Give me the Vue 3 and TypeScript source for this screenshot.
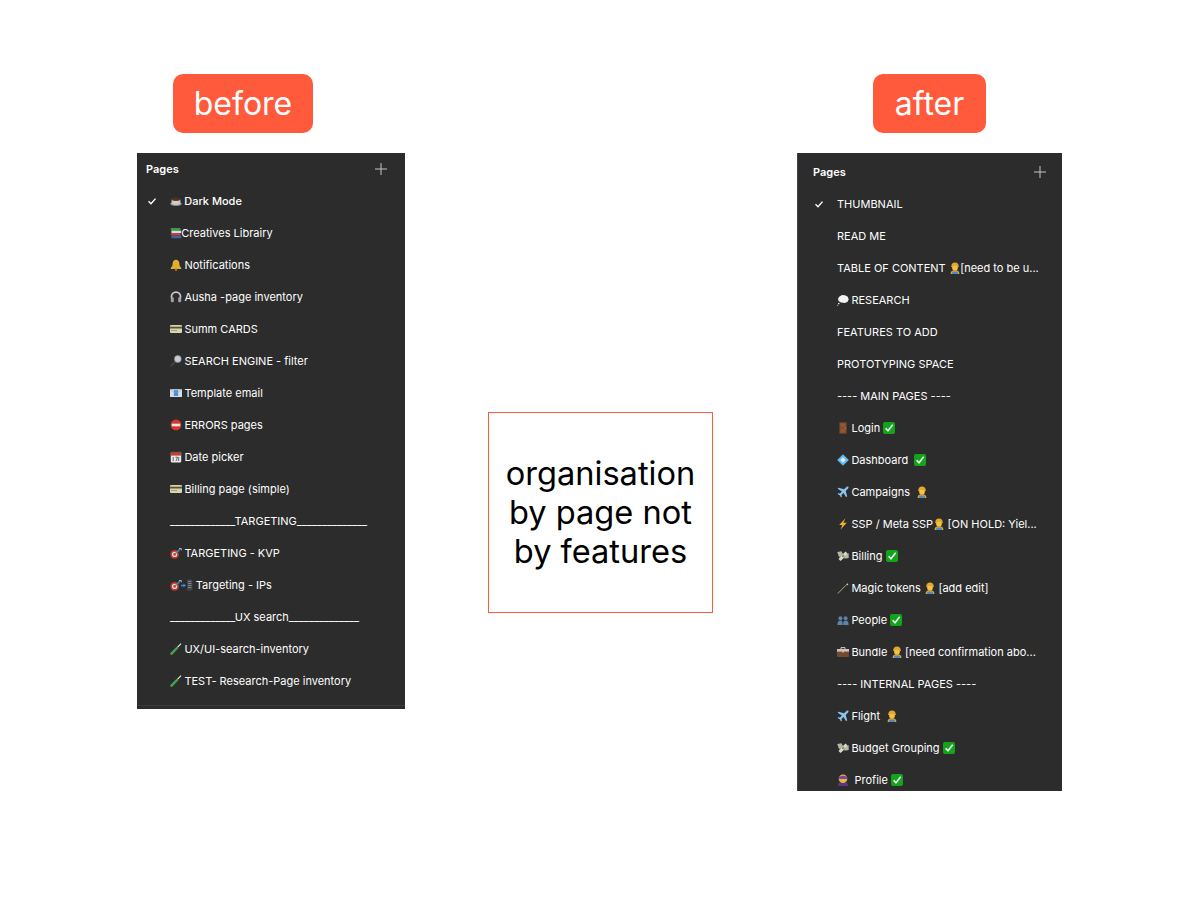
<script setup lang="ts">
interface Panel {
  name: string
  variant: string
  rows: string[]
}

const panels: Panel[] = [
  {
    name: 'before',
    variant: 'is-before',
    rows: [
      '{cup} Dark Mode',
      '{books}Creatives Librairy',
      '{bell} Notifications',
      '{phones} Ausha -page inventory',
      '{card} Summ CARDS',
      '{lens} SEARCH ENGINE - filter',
      '{mail} Template email',
      '{noentry} ERRORS pages',
      '{calendar} Date picker',
      '{card} Billing page (simple)',
      '_____________TARGETING______________',
      '{dart} TARGETING - KVP',
      '{dart}{mobile} Targeting - IPs',
      '_____________UX search______________',
      '{tube} UX/UI-search-inventory',
      '{tube} TEST- Research-Page inventory',
    ],
  },
  {
    name: 'after',
    variant: 'is-after',
    rows: [
      'THUMBNAIL',
      'READ ME',
      'TABLE OF CONTENT {worker}[need to be u...',
      '{balloon} RESEARCH',
      'FEATURES TO ADD',
      'PROTOTYPING SPACE',
      '---- MAIN PAGES ----',
      '{door} Login {done}',
      '{diamond} Dashboard  {done}',
      '{plane} Campaigns  {worker}',
      '{zap} SSP / Meta SSP{worker} [ON HOLD: Yiel...',
      '{money} Billing {done}',
      '{wand} Magic tokens {worker} [add edit]',
      '{people} People {done}',
      '{case} Bundle {worker} [need confirmation abo...',
      '---- INTERNAL PAGES ----',
      '{plane} Flight  {worker}',
      '{money} Budget Grouping {done}',
      '{hero}  Profile {done}',
    ],
  },
]

function parts(label: string) {
  return label
    .split(/(\{\w+\})/)
    .filter(Boolean)
    .map((text) => (text.startsWith('{')
      ? { icon: `#e-${text.slice(1, -1)}`, text: '' }
      : { icon: '', text }))
}
</script>

<template>
  <div class="board">
    <svg class="sprite" aria-hidden="true">
      <symbol id="e-cup" viewBox="0 0 12 12"><ellipse cx="6" cy="8.800" rx="5.800" ry="1.900" fill="#a9a49c" /><path d="M1.600 4.200h8.800v2.900c0 1.700-1.700 2.800-4.400 2.800S1.600 8.800 1.600 7.100z" fill="#d2cdc4" /><ellipse cx="6" cy="4.200" rx="4.400" ry="1.700" fill="#4e3220" /></symbol>
      <symbol id="e-books" viewBox="0 0 12 12"><rect x=".8" y="1" width="9.600" height="2.600" rx=".5" fill="#3f9a45" /><rect x="1.400" y="3.600" width="9.800" height="2.400" fill="#d9dcd6" /><rect x=".8" y="6" width="9.800" height="2.600" rx=".5" fill="#b8434b" /><rect x="1.400" y="8.600" width="9.800" height="2.600" rx=".5" fill="#4a5f96" /></symbol>
      <symbol id="e-bell" viewBox="0 0 12 12"><path d="M6 .8c2.200 0 3.400 1.700 3.400 4 0 2.100.8 3.100 1.900 4.100v1H.7v-1c1.100-1 1.900-2 1.900-4.100 0-2.300 1.200-4 3.400-4z" fill="#dfae2e" /><circle cx="6" cy="10.700" r="1.200" fill="#a8761a" /></symbol>
      <symbol id="e-phones" viewBox="0 0 12 12"><path d="M1.500 7V5.600a4.500 4.500 0 0 1 9 0V7" fill="none" stroke="#c9c9c9" stroke-width="1.700" /><rect x=".8" y="6.200" width="3" height="5" rx="1.300" fill="#a2a2a2" /><rect x="8.200" y="6.200" width="3" height="5" rx="1.300" fill="#a2a2a2" /></symbol>
      <symbol id="e-card" viewBox="0 0 12 12"><rect y="2" width="12" height="8" rx="1" fill="#ddd5a6" /><rect y="3.700" width="12" height="1.800" fill="#55544c" /><rect x="1" y="7" width="6" height="1" fill="#a8a27a" /></symbol>
      <symbol id="e-lens" viewBox="0 0 12 12"><path d="M5.300 6.700 1 10.800" stroke="#43464d" stroke-width="1.700" stroke-linecap="round" /><circle cx="7.800" cy="4" r="3.400" fill="#c9ccd2" stroke="#8c8f96" stroke-width=".7" /></symbol>
      <symbol id="e-mail" viewBox="0 0 12 12"><rect y="2.200" width="12" height="7.800" fill="#d6dde6" /><rect x="3.800" y="3.200" width="4.400" height="5.800" fill="#4f8fd8" /><path d="M0 2.400 5 6M12 2.400 7 6" stroke="#9fb0c4" stroke-width=".6" /></symbol>
      <symbol id="e-noentry" viewBox="0 0 12 12"><circle cx="6" cy="6" r="5.400" fill="#d9362f" /><rect x="1.800" y="4.700" width="8.400" height="2.600" fill="#f1e8e6" /></symbol>
      <symbol id="e-calendar" viewBox="0 0 12 12"><rect x=".8" y="1" width="10.400" height="10.400" rx=".8" fill="#e9e9e9" /><rect x=".8" y="1" width="10.400" height="3.600" fill="#b9423f" /><path d="M3 0v2.500M9 0v2.500" stroke="#555" /><path d="M3.200 6v4M5.500 6.200h2.200L6 10M8.700 6v4" stroke="#444" fill="none" stroke-width=".8" /></symbol>
      <symbol id="e-dart" viewBox="0 0 12 12"><circle cx="4.600" cy="7.400" r="4.300" fill="#c8362f" /><circle cx="4.600" cy="7.400" r="2.600" fill="#e8d8d4" /><circle cx="4.600" cy="7.400" r="1.300" fill="#c8362f" /><path d="M5 7 10 2.200" stroke="#3e9db4" stroke-width="1.300" /><path d="M9 1.500h2.300v1.800" stroke="#d4d4dd" stroke-width=".8" fill="none" /></symbol>
      <symbol id="e-mobile" viewBox="0 0 12 12"><path d="M0 6.500h3" stroke="#2f8fe8" stroke-width="1.400" /><path d="M2.400 4.400 5 6.500 2.400 8.600z" fill="#2f8fe8" /><rect x="6" y=".5" width="5.400" height="11" rx=".7" fill="#40454a" /><path d="M7 2.500h3.400M7 4.500h3.400M7 6.500h3.400M7 8.500h3.400" stroke="#8fa8a0" stroke-width=".7" /></symbol>
      <symbol id="e-tube" viewBox="0 0 12 12"><path d="M6 5.800 11 .6" stroke="#e2ecdf" stroke-width="1.200" /><path d="M1.500 10.700 7 5" stroke="#45a34a" stroke-width="2.500" stroke-linecap="round" /></symbol>
      <symbol id="e-worker" viewBox="0 0 12 12"><path d="M2.400 4a3.600 3.600 0 0 1 7.200 0l.5 1H1.900z" fill="#e3a827" /><ellipse cx="6" cy="6" rx="2.900" ry="2.300" fill="#f0c24c" /><path d="M1.600 12c0-2.800 1.700-3.900 4.400-3.900s4.400 1.100 4.400 3.900z" fill="#e3a827" /><path d="M3.200 12V9.600h5.600V12z" fill="#4f86c9" /></symbol>
      <symbol id="e-balloon" viewBox="0 0 12 12"><path d="M2.500 2.500 5 1 8 1.200l2.800 1.600.9 2.600-1.300 2.500-2.800 1L4 8.500 1.600 7 1 4.400z" fill="#f2f2f2" /><circle cx="1.800" cy="9.600" r=".8" fill="#f2f2f2" /><circle cx=".7" cy="11.300" r=".5" fill="#f2f2f2" /></symbol>
      <symbol id="e-door" viewBox="0 0 12 12"><rect x="2.400" y=".3" width="7.200" height="11.400" fill="#7c4a2d" /><path d="M3.600 1.500h4.800v3.800H3.600zM3.600 6.400h4.800v4H3.600z" fill="#8f5936" /><circle cx="8.600" cy="6" r=".5" fill="#d8b26a" /></symbol>
      <symbol id="e-diamond" viewBox="0 0 12 12"><path d="M6 .2 11.800 6 6 11.800.2 6z" fill="#66b7ef" /><path d="M6 3.300 8.700 6 6 8.700 3.300 6z" fill="#d5edfb" /></symbol>
      <symbol id="e-plane" viewBox="0 0 12 12"><path d="M11.300.6c-.7-.5-1.700 0-2.400.8L7 3.300 1.700 1.800l-1 1 4.200 2.700L3 7.500 1.300 7.200l-.8.800 2.200 1.300L4 11.500l.8-.8-.3-1.700 2-1.900 2.700 4.200 1-1L8.700 5l1.900-1.900c.8-.7 1.300-1.700.7-2.500z" fill="#8cc4ee" /></symbol>
      <symbol id="e-zap" viewBox="0 0 12 12"><path d="M8.400.3 2.200 6.900h3.200l-2 4.800 6.400-7H6.400z" fill="#f0b429" /></symbol>
      <symbol id="e-money" viewBox="0 0 12 12"><path d="M.3 2 4.500 1.200 6.500 5 2 7zM6.800 4.500 11.700 3.300 11.700 8 7.500 8.800z" fill="#b4baa0" /><path d="M3.500 6.500 8.500 1.500 10.500 3.500 6 8.800 3.500 11 1.500 9z" fill="#d9d9cc" /><circle cx="6.200" cy="5.900" r="1.400" fill="#8b9a72" /></symbol>
      <symbol id="e-wand" viewBox="0 0 12 12"><path d="M.8 11.500 8.800 3.400" stroke="#b9a88a" stroke-width="1" /><path d="M10.200.8 10.600 2l1.100.3-1.100.4-.4 1.100-.4-1.100-1-.4 1-.3z" fill="#f0e4b0" /></symbol>
      <symbol id="e-people" viewBox="0 0 12 12"><circle cx="3.400" cy="4.200" r="2" fill="#5e83aa" /><circle cx="8.600" cy="4.200" r="2" fill="#5e83aa" /><path d="M.4 11c0-3 1-4.400 3-4.400s2.400 1.400 2.400 4.400zM6.200 11c0-3 .4-4.400 2.400-4.400s3 1.400 3 4.400z" fill="#5e83aa" /></symbol>
      <symbol id="e-case" viewBox="0 0 12 12"><rect y="3" width="12" height="8" rx="1" fill="#74492f" /><path d="M4 3V1.600h4V3" fill="none" stroke="#ccc" stroke-width="1" /><rect y="3" width="12" height="2.600" fill="#c9c5bd" /><rect x="5" y="5" width="2" height="1.500" fill="#d8b26a" /></symbol>
      <symbol id="e-done" viewBox="0 0 12 12"><rect width="12" height="12" rx="2" fill="#12a51c" /><path d="M2.600 6.300 5 8.800 9.700 2.800" stroke="#f4f4f4" stroke-width="1.600" fill="none" /></symbol>
      <symbol id="e-hero" viewBox="0 0 12 12"><path d="M.8 12c0-3 2-4.500 5.200-4.500S11.200 9 11.200 12z" fill="#5d3380" /><circle cx="6" cy="4.800" r="4.300" fill="#e6b53c" /><path d="M1.800 3.800C3 1 9 1 10.200 3.800v1.300H1.800z" fill="#7a45a6" /></symbol>
    </svg>

    <section v-for="panel in panels" :key="panel.name" class="column" :class="panel.variant">
      <div class="pill">{{ panel.name }}</div>
      <div class="panel">
        <header class="panel-head">
          <span class="panel-title">Pages</span>
          <svg class="plus" viewBox="0 0 12 12"><path d="M6 0v12M0 6h12" stroke="currentColor" /></svg>
        </header>
        <div
          v-for="(row, index) in panel.rows"
          :key="index"
          class="row"
          :class="{ 'is-current': index === 0 }"
        >
          <svg v-if="index === 0" class="check" viewBox="0 0 12 12"><path d="M2.500 6.300 5 8.700 9.500 3.600" fill="none" stroke="currentColor" stroke-width="1.400" /></svg>
          <span class="label">
            <template v-for="(part, i) in parts(row)" :key="i">
              <svg v-if="part.icon" class="emoji"><use :href="part.icon" /></svg>
              <template v-else>{{ part.text }}</template>
            </template>
          </span>
        </div>
      </div>
    </section>

    <div class="note">organisation<br>by page not<br>by features</div>
  </div>
</template>

<style>
body {
  background: #ffffff;
}
</style>

<style scoped>
.board {
  position: relative;
  box-sizing: border-box;
  display: grid;
  grid-template-columns: 268px 225px 266px;
  column-gap: 83px;
  align-items: start;
  height: 905px;
  padding: 74px 0 0 137px;
  font-family: Inter, "Liberation Sans", sans-serif;
  overflow: hidden;
}

.sprite {
  position: absolute;
  width: 0;
  height: 0;
}

.column {
  display: flex;
  flex-direction: column;
  align-items: flex-start;
}

.column.is-before {
  grid-column: 1;
  grid-row: 1;
}

.column.is-after {
  grid-column: 3;
  grid-row: 1;
  margin-left: 1px;
}

.pill {
  height: 59px;
  margin-bottom: 20px;
  border-radius: 10px;
  background: #ff5a3c;
  color: #ffffff;
  font-size: 32px;
  line-height: 59px;
  text-align: center;
}

.is-before .pill {
  width: 140px;
  margin-left: 36px;
}

.is-after .pill {
  width: 113px;
  margin-left: 76px;
}

.panel {
  width: 100%;
  background: #2c2c2c;
  color: #ffffff;
  font-size: 11px;
  overflow: hidden;
}

.is-before .panel {
  box-sizing: border-box;
  height: 556px;
  padding-left: 9px;
  padding-right: 18px;
  background:
    linear-gradient(#3b3b3b, #3b3b3b) 0 552px / 100% 1px no-repeat,
    #2c2c2c;
}

.is-after .panel {
  box-sizing: border-box;
  height: 638px;
  padding: 3px 16px 0 15px;
  border-left: 1px solid #454545;
}

.panel-head {
  display: flex;
  align-items: center;
  justify-content: space-between;
  height: 32px;
}

.panel-title {
  font-weight: 600;
}

.plus {
  width: 12px;
  height: 12px;
  color: #c4c4c4;
}

.row {
  display: flex;
  align-items: center;
  height: 32px;
  padding-left: 24px;
  position: relative;
  white-space: pre;
}

.row.is-current {
  font-weight: 500;
}

.is-after .row.is-current {
  font-weight: 400;
}

.check {
  position: absolute;
  left: 0;
  top: 10px;
  width: 12px;
  height: 12px;
}

.label {
  display: block;
  line-height: 16px;
}

.emoji {
  width: 12px;
  height: 12px;
  margin-right: -0.7px;
  vertical-align: -2px;
}

.note {
  grid-column: 2;
  grid-row: 1;
  box-sizing: border-box;
  display: flex;
  align-items: center;
  justify-content: center;
  height: 201px;
  margin-top: 338px;
  border: 1px solid #ff5a3c;
  color: #000000;
  font-size: 32.6px;
  line-height: 39px;
  text-align: center;
}
</style>
